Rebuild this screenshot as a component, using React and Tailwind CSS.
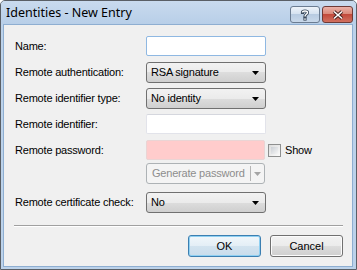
import React from "react";

const font = { fontFamily: '"Liberation Sans", Arial, sans-serif' };

function Arrow({ color = "#000" }) {
  return (
    <svg width="7" height="4" viewBox="0 0 7 4" className="block">
      <path d="M0 0H7L3.5 4Z" fill={color} />
    </svg>
  );
}

function Combo({ text }) {
  return (
    <div className="w-[120px] h-[21px] rounded-[3px] border border-[#707070] bg-[linear-gradient(#f2f2f2_0%,#ebebeb_50%,#dddddd_50%,#cfcfcf_100%)] flex items-center pl-[4px] pr-[6px] justify-between">
      <span className="text-[11px] tracking-[-0.2px] text-black leading-none">{text}</span>
      <Arrow />
    </div>
  );
}

function Label({ children }) {
  return (
    <div className="w-[142px] shrink-0 pl-[11px] text-[11px] tracking-[-0.2px] text-black leading-none">
      {children}
    </div>
  );
}

export default function App() {
  return (
    <div style={font} className="w-[357px] h-[270px] border border-[#5a5f66] bg-[#bcd2ea] flex flex-col rounded-t-[5px] overflow-hidden">
      {/* title bar */}
      <div className="h-[23px] shrink-0 flex items-center bg-[linear-gradient(#c9daee,#b8cfe8)] relative">
        <span
          className="pl-[5px] pt-[1px] text-[12.5px] text-black"
          style={{ fontFamily: '"Noto Sans", "Open Sans", sans-serif' }}
        >
          Identities - New Entry
        </span>
        <div className="ml-auto mr-[3px] mt-[5px] flex gap-[2px] self-start">
          <div className="w-[30px] h-[17px] rounded-[3px] border border-[#6b7c91] bg-[linear-gradient(#eef3f9_0%,#d3e0ef_50%,#b8cbe1_50%,#c8d8ea_100%)] flex items-center justify-center">
            <svg width="10" height="12" viewBox="0 0 10 12">
              <path d="M2.5 3.5C2.5 1.5 7.5 1.5 7.5 3.5C7.5 5.5 5 5 5 7.5" fill="none" stroke="#3b4a5c" strokeWidth="3.2" strokeLinecap="square" />
              <rect x="3.4" y="8.6" width="3.2" height="3" fill="#3b4a5c" />
              <path d="M2.5 3.5C2.5 1.5 7.5 1.5 7.5 3.5C7.5 5.5 5 5 5 7.5" fill="none" stroke="#fff" strokeWidth="1.4" />
              <rect x="4.3" y="9.4" width="1.4" height="1.4" fill="#fff" />
            </svg>
          </div>
          <div className="w-[31px] h-[17px] rounded-[3px] border border-[#6e3a36] bg-[linear-gradient(#eab1a8_0%,#d98676_50%,#c24a3b_50%,#d1705f_100%)] flex items-center justify-center">
            <svg width="12" height="10" viewBox="0 0 12 10">
              <path d="M2 1.5L10 8.5M10 1.5L2 8.5" stroke="#4a2420" strokeWidth="3.6" />
              <path d="M2 1.5L10 8.5M10 1.5L2 8.5" stroke="#fff" strokeWidth="1.6" />
            </svg>
          </div>
        </div>
      </div>

      {/* client */}
      <div className="flex-1 ml-[2px] mr-[3px] mb-[2px] border border-[#8eaed1] bg-[#f0f0f0] flex flex-col pt-[11px]">
        <div className="flex items-center h-[20px]">
          <Label>Name:</Label>
          <div className="w-[120px] h-[20px] rounded-[2px] border border-[#8fb8e2] bg-white" />
        </div>
        <div className="flex items-center h-[21px] mt-[6px]">
          <Label>Remote authentication:</Label>
          <Combo text="RSA signature" />
        </div>
        <div className="flex items-center h-[21px] mt-[5px]">
          <Label>Remote identifier type:</Label>
          <Combo text="No identity" />
        </div>
        <div className="flex items-center h-[20px] mt-[5px]">
          <Label>Remote identifier:</Label>
          <div className="w-[120px] h-[20px] rounded-[2px] border border-[#e2e3ea] border-t-[#d5d7de] bg-white" />
        </div>
        <div className="flex items-center h-[20px] mt-[6px]">
          <Label>Remote password:</Label>
          <div className="w-[119px] h-[20px] rounded-[2px] border border-[#ead4d4] bg-[#ffcccc]" />
          <div className="ml-[3px] w-[13px] h-[13px] border border-[#8e8f8f] bg-[linear-gradient(135deg,#dcdcdc,#fbfbfb)] p-[2px]">
            <div className="w-full h-full bg-[linear-gradient(135deg,#cbcfd5,#f5f5f5)]" />
          </div>
          <span className="ml-[4px] text-[11px] tracking-[-0.2px] leading-none text-black">Show</span>
        </div>
        <div className="flex items-center h-[21px] mt-[3px]">
          <div className="w-[142px] shrink-0" />
          <div className="w-[119px] h-[21px] rounded-[3px] border border-[#adb2b5] bg-[#f4f4f4] flex items-center">
            <span className="pl-[5px] text-[11px] tracking-[-0.2px] leading-none text-[#8d8d8d] flex-1">Generate password</span>
            <div className="w-px h-[15px] bg-[#b5b5b5]" />
            <div className="w-[13px] flex justify-center">
              <Arrow color="#a5a5a5" />
            </div>
          </div>
        </div>
        <div className="flex items-center h-[21px] mt-[8px]">
          <Label>Remote certificate check:</Label>
          <Combo text="No" />
        </div>
        <div className="mt-[12px] ml-[10px] mr-[9px] h-[2px] border-t border-[#a0a0a0] border-b border-b-white" />
        <div className="mt-[8px] mr-[9px] flex justify-end gap-[9px]">
          <div className="w-[73px] h-[22px] rounded-[3px] border border-[#3c7fb1] bg-[linear-gradient(#f1f7fb_0%,#e3eef6_50%,#d2e3ef_50%,#c9dceb_100%)] shadow-[inset_0_0_0_1px_#8fd0f2] flex items-center justify-center text-[11px] leading-none text-black">
            OK
          </div>
          <div className="w-[73px] h-[22px] rounded-[3px] border border-[#707070] bg-[linear-gradient(#f2f2f2_0%,#ebebeb_50%,#dddddd_50%,#cfcfcf_100%)] shadow-[inset_0_0_0_1px_#fcfcfc] flex items-center justify-center text-[11px] leading-none text-black">
            Cancel
          </div>
        </div>
      </div>
    </div>
  );
}
